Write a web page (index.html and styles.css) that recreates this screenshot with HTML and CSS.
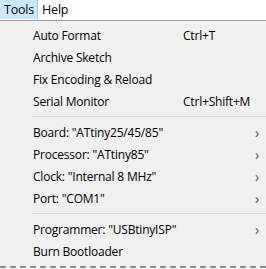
FILE: index.html
```html
<!DOCTYPE html>
<html>
<head>
<meta charset="utf-8">
<link rel="stylesheet" href="styles.css">
</head>
<body>
<div class="menubar">
  <span class="top active">Tools</span>
  <span class="top">Help</span>
</div>
<div class="menu">
  <div class="item"><span class="label">Auto Format</span><span class="key">Ctrl+T</span><span class="arrow"></span></div>
  <div class="item"><span class="label">Archive Sketch</span><span class="key"></span><span class="arrow"></span></div>
  <div class="item"><span class="label">Fix Encoding &amp; Reload</span><span class="key"></span><span class="arrow"></span></div>
  <div class="item"><span class="label">Serial Monitor</span><span class="key">Ctrl+Shift+M</span><span class="arrow"></span></div>
  <div class="sep"></div>
  <div class="item"><span class="label">Board: "ATtiny25/45/85"</span><span class="key"></span><span class="arrow">›</span></div>
  <div class="item"><span class="label">Processor: "ATtiny85"</span><span class="key"></span><span class="arrow">›</span></div>
  <div class="item"><span class="label">Clock: "Internal 8 MHz"</span><span class="key"></span><span class="arrow">›</span></div>
  <div class="item"><span class="label">Port: "COM1"</span><span class="key"></span><span class="arrow">›</span></div>
  <div class="sep"></div>
  <div class="item"><span class="label">Programmer: "USBtinyISP"</span><span class="key"></span><span class="arrow">›</span></div>
  <div class="item"><span class="label">Burn Bootloader</span><span class="key"></span><span class="arrow"></span></div>
</div>
</body>
</html>
```
FILE: styles.css
```css
html, body {
  margin: 0;
  padding: 0;
  background: #ffffff;
  width: 266px;
  height: 269px;
  overflow: hidden;
  font-family: "Open Sans", "Noto Sans", "Liberation Sans", sans-serif;
  font-size: 12px;
  letter-spacing: -0.2px;
  color: #000;
}
.menubar {
  display: flex;
  height: 20px;
  background: #fff;
  border-bottom: 1px solid #a0a0a0;
}
.top {
  display: flex;
  align-items: center;
  padding: 0 3px 0 4px;
  height: 19px;
  line-height: 19px;
  font-size: 12.5px;
}
.top.active {
  background: #cce8ff;
  border-right: 1px solid #99d1ff;
  padding-right: 3px;
}
.menu {
  background: #f0f0f0;
  padding: 3px 0 4px 0;
  border-bottom: 2px dashed #8c8c8c;
}
.item {
  display: flex;
  align-items: center;
  height: 22px;
  padding-left: 33px;
}
.label {
  flex: 1;
  white-space: nowrap;
}
.key {
  width: 72px;
  white-space: nowrap;
}
.arrow {
  width: 11px;
  color: #555;
  font-size: 14px;
}
.sep {
  height: 1px;
  background: #d7d7d7;
  margin: 4px 0 4px 32px;
}
```
